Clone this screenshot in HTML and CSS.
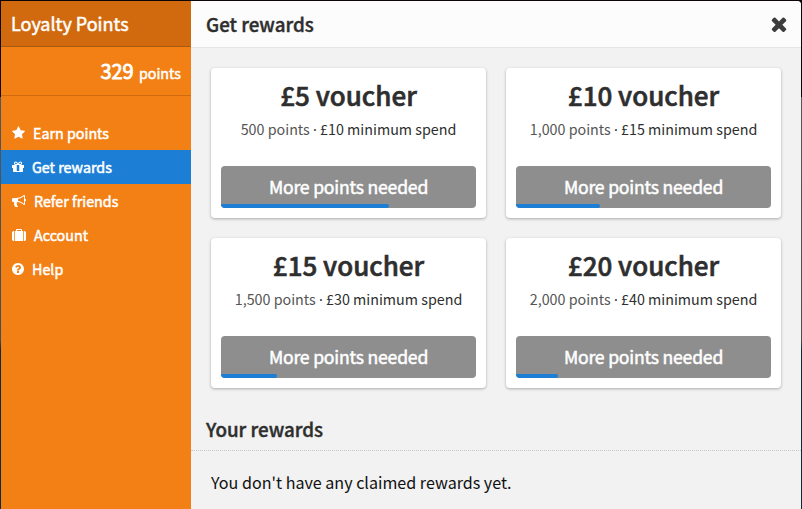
FILE: index.html
```html
<!doctype html>
<html lang="en">

<head>
    <meta charset="utf-8">
    <title>Loyalty Points</title>
    <link rel="stylesheet" href="styles.css">
</head>

<body>
    <div class="panel">
        <div class="sidebar">
            <div class="brand">Loyalty Points</div>
            <div class="balance"><span class="amount">329</span> points</div>
            <ul class="menu">
                <li>
                    <svg width="13" height="14" viewBox="64 0 1664 1792"><path d="M1728 647q0 22-26 48l-363 354 86 500q1 7 1 20 0 21-10.500 35.500t-30.500 14.500q-19 0-40-12l-449-236-449 236q-22 12-40 12-21 0-31.500-14.500t-10.500-35.500q0-6 2-20l86-500-364-354q-25-27-25-48 0-37 56-46l502-73 225-455q19-41 49-41t49 41l225 455 502 73q56 9 56 46z"/></svg>
                    <span>Earn points</span>
                </li>
                <li class="active">
                    <svg width="12" height="14" viewBox="128 0 1536 1792"><path d="M1056 1356v-716h-320v716q0 25 18 38.500t46 13.500h192q28 0 46-13.500t18-38.500zm-456-844h195l-126-161q-26-31-69-31-40 0-68 28t-28 68 28 68 68 28zm688-96q0-40-28-68t-68-28q-43 0-69 31l-125 161h194q40 0 68-28t28-68zm376 256v320q0 14-9 23t-23 9h-96v416q0 40-28 68t-68 28h-1088q-40 0-68-28t-28-68v-416h-96q-14 0-23-9t-9-23v-320q0-14 9-23t23-9h440q-93 0-158.500-65.500t-65.500-158.500 65.500-158.500 158.500-65.500q107 0 168 77l128 165 128-165q61-77 168-77 93 0 158.500 65.500t65.500 158.500-65.500 158.500-158.500 65.500h440q14 0 23 9t9 23z"/></svg>
                    <span>Get rewards</span>
                </li>
                <li>
                    <svg width="14" height="14" viewBox="0 0 1792 1792"><path d="M1664 640q53 0 90.500 37.500t37.500 90.500-37.500 90.500-90.500 37.500v384q0 52-38 90t-90 38q-417-347-812-380-58 19-91 66t-31 100.500 40 92.500q-20 33-23 65.500t6 58 33.500 55 48 50 61.500 50.500q-29 58-111.500 83t-168.500 11.500-132-55.500q-7-23-29.500-87.500t-32-94.500-23-89-15-101 3.500-98.500 22-110.500h-122q-66 0-113-47t-47-113v-192q0-66 47-113t113-47h480q435 0 896-384 52 0 90 38t38 90v384zm-128 604v-954q-394 302-768 343v270q377 42 768 341z"/></svg>
                    <span>Refer friends</span>
                </li>
                <li>
                    <svg width="14" height="14" viewBox="0 0 1792 1792"><path d="M640 384h512v-128h-512v128zm-352 0v1280h-64q-92 0-158-66t-66-158v-832q0-92 66-158t158-66h64zm1120 0v1280h-1024v-1280h128v-160q0-40 28-68t68-28h576q40 0 68 28t28 68v160h128zm384 224v832q0 92-66 158t-158 66h-64v-1280h64q92 0 158 66t66 158z"/></svg>
                    <span>Account</span>
                </li>
                <li>
                    <svg width="12" height="14" viewBox="128 0 1536 1792"><path d="M1024 1376v-192q0-14-9-23t-23-9h-192q-14 0-23 9t-9 23v192q0 14 9 23t23 9h192q14 0 23-9t9-23zm256-672q0-88-55.500-163t-138.500-116-170-41q-243 0-371 213-15 24 8 42l132 100q7 6 19 6 16 0 25-12 53-68 86-92 34-24 86-24 48 0 85.500 26t37.500 59q0 38-20 61t-68 45q-63 28-115.500 86.500t-52.500 125.500v36q0 14 9 23t23 9h192q14 0 23-9t9-23q0-19 21.500-49.500t54.500-49.500q32-18 49-28.500t46-35 44.500-48 28-60.500 12.500-81zm384 192q0 209-103 385.500t-279.500 279.500-385.500 103-385.500-103-279.500-279.500-103-385.500 103-385.500 279.500-279.500 385.500-103 385.500 103 279.500 279.500 103 385.500z"/></svg>
                    <span>Help</span>
                </li>
            </ul>
        </div>
        <div class="content">
            <div class="header">
                <h1>Get rewards</h1>
                <svg class="close" width="22" height="22" viewBox="0 0 1792 1792"><path d="M1490 1322q0 40-28 68l-136 136q-28 28-68 28t-68-28l-294-294-294 294q-28 28-68 28t-68-28l-136-136q-28-28-28-68t28-68l294-294-294-294q-28-28-28-68t28-68l136-136q28-28 68-28t68 28l294 294 294-294q28-28 68-28t68 28l136 136q28 28 28 68t-28 68l-294 294 294 294q28 28 28 68z"/></svg>
            </div>
            <div class="rewards">
                <div class="card">
                    <h2>£5 voucher</h2>
                    <p><span class="cost">500 points</span> <span class="dot">·</span> £10 minimum spend</p>
                    <div class="button">More points needed<div class="progress" style="width: 65.8%"></div></div>
                </div>
                <div class="card">
                    <h2>£10 voucher</h2>
                    <p><span class="cost">1,000 points</span> <span class="dot">·</span> £15 minimum spend</p>
                    <div class="button">More points needed<div class="progress" style="width: 32.9%"></div></div>
                </div>
                <div class="card">
                    <h2>£15 voucher</h2>
                    <p><span class="cost">1,500 points</span> <span class="dot">·</span> £30 minimum spend</p>
                    <div class="button">More points needed<div class="progress" style="width: 21.93%"></div></div>
                </div>
                <div class="card">
                    <h2>£20 voucher</h2>
                    <p><span class="cost">2,000 points</span> <span class="dot">·</span> £40 minimum spend</p>
                    <div class="button">More points needed<div class="progress" style="width: 16.45%"></div></div>
                </div>
            </div>
            <h1 class="section">Your rewards</h1>
            <p class="empty">You don't have any claimed rewards yet.</p>
        </div>
    </div>
</body>

</html>
```
FILE: styles.css
```css
* {
    box-sizing: border-box;
}

body {
    margin: 0;
    padding: 1px 1px 0;
    height: 509px;
    overflow: hidden;
    background: linear-gradient(#0c0608 97px, #55565a 97px, #4a4c50 340px, #102a35 350px);
    font-family: "Noto Sans CJK SC", "Noto Sans", sans-serif;
    color: #2e2e2e;
}

h1, h2, p, ul {
    margin: 0;
    padding: 0;
}

.panel {
    display: flex;
    height: 508px;
    border-radius: 0 4px 0 0;
    overflow: hidden;
    background: #f2f2f2;
}

.sidebar {
    width: 190px;
    background: #f38015;
    color: #fff;
    -webkit-text-stroke: 0.5px;
}

.brand {
    height: 46px;
    padding-left: 10px;
    border-bottom: 1px solid #a95a11;
    background: #d16a0e;
    font-size: 18px;
    line-height: 45px;
}

.balance {
    height: 49px;
    padding-right: 10px;
    border-bottom: 1px solid #d16a0e;
    font-size: 14.3px;
    line-height: 48px;
    text-align: right;
}

.amount {
    margin-right: 2px;
    font-size: 20px;
    -webkit-text-stroke: 0.8px;
}

.menu {
    padding-top: 20px;
    list-style: none;
}

.menu li {
    display: flex;
    align-items: center;
    gap: 8px;
    height: 34px;
    padding-left: 11px;
    font-size: 14.3px;
    line-height: 34px;
}

.menu svg {
    fill: #fff;
    stroke: none;
}

.menu .active {
    background: #1c7fd5;
}

.content {
    flex: 1;
}

.header {
    display: flex;
    align-items: center;
    justify-content: space-between;
    height: 47px;
    padding: 0 11px 0 15px;
    border-bottom: 1px solid #e6e6e6;
    background: #fcfcfc;
}

h1 {
    font-size: 18.8px;
    font-weight: 500;
    line-height: 46px;
    -webkit-text-stroke: 0.4px;
}

.close {
    fill: #3c3c3c;
}

.rewards {
    display: grid;
    grid-template-columns: 275px 275px;
    gap: 20px;
    padding: 20px 20px 0;
}

.card {
    height: 150px;
    padding: 10px;
    border-radius: 4px;
    background: #fff;
    box-shadow: 0 1px 3px rgba(0, 0, 0, 0.3);
    text-align: center;
}

h2 {
    height: 38px;
    font-size: 26px;
    font-weight: 500;
    line-height: 34px;
    -webkit-text-stroke: 0.6px;
}

.card p {
    height: 50px;
    font-size: 14.3px;
    line-height: 26px;
}

.cost {
    color: #555;
}

.dot {
    font-family: "Noto Sans", sans-serif;
}

.button {
    position: relative;
    height: 42px;
    border-radius: 4px;
    overflow: hidden;
    background: #8e8e8e;
    color: #fff;
    font-size: 17.6px;
    letter-spacing: -0.2px;
    line-height: 42px;
    -webkit-text-stroke: 0.5px;
}

/* share of the points already collected */
.progress {
    position: absolute;
    left: 0;
    bottom: 0;
    height: 4px;
    border-radius: 0 2px 2px 0;
    background: #1c7fd5;
}

.section {
    height: 43px;
    margin-top: 20px;
    padding-left: 15px;
    border-bottom: 1px dotted #c8c8c8;
    line-height: 42px;
}

.empty {
    padding-left: 20px;
    color: #111;
    font-size: 16.1px;
    line-height: 62px;
}
```
